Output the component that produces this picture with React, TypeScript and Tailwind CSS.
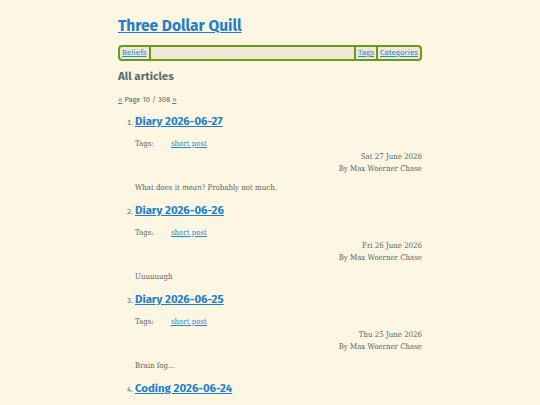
import React from "react";

const posts = [
  { title: "Diary 2026-06-27", date: "Sat 27 June 2026", body: <>What does it <em>mean</em>? Probably not much.</> },
  { title: "Diary 2026-06-26", date: "Fri 26 June 2026", body: <>Uuuuuugh</> },
  { title: "Diary 2026-06-25", date: "Thu 25 June 2026", body: <>Brain fog...</> },
  { title: "Coding 2026-06-24", date: "Wed 24 June 2026", body: <>Stuff.</> },
];

const sans = "font-['Fira_Sans','Lato',sans-serif]";
const serif = "font-['DejaVu_Serif_Condensed','DejaVu_Serif',serif]";

export default function App() {
  return (
    <div className="h-[405px] overflow-hidden bg-[#fdf6e3] text-[#56676c]">
      <div className="mx-auto w-[304px] pt-[15px]">
        <h1 className={`${sans} text-[15.5px] leading-[22px] font-bold`}>
          <a href="#" className="text-[#1f7fcc] underline">Three Dollar Quill</a>
        </h1>

        <nav className={`${sans} mt-[8px] flex h-[16px] items-center rounded-[4px] border-2 border-[#6b9a1a] bg-[#eee8d5] text-[8px] leading-[12px]`}>
          <a href="#" className="px-[2px] text-[#268bd2] underline">Beliefs</a>
          <div className="h-[12px] flex-1 border-x-2 border-[#6b9a1a]" />
          <a href="#" className="px-[2px] text-[#268bd2] underline">Tags</a>
          <div className="h-[12px] border-l-2 border-[#6b9a1a]" />
          <a href="#" className="px-[2px] text-[#268bd2] underline">Categories</a>
        </nav>

        <h2 className={`${sans} mt-[6px] text-[11.5px] leading-[18px] font-bold text-[#586e75]`}>All articles</h2>

        <p className={`${sans} mt-[9px] text-[7.6px] leading-[12px]`}>
          <a href="#" className="text-[#268bd2] underline">«</a> Page 10 / 308{" "}
          <a href="#" className="text-[#268bd2] underline">»</a>
        </p>

        <ol className="mt-[7px] list-decimal pl-[17px] marker:text-[7.5px] marker:font-['Fira_Sans']">
          {posts.map((p) => (
            <li key={p.title} className="mb-[8px]">
              <h3 className={`${sans} text-[11.4px] leading-[16px] font-bold`}>
                <a href="#" className="text-[#1f7fcc] underline">{p.title}</a>
              </h3>
              <div className={`${serif} mt-[9px] text-[7.8px] leading-[12px]`}>
                <div className="flex">
                  <span className="w-[36px]">Tags:</span>
                  <a href="#" className="text-[#268bd2] underline">short post</a>
                </div>
                <div className="mt-[1px] text-right">{p.date}</div>
                <div className="text-right">By Max Woerner Chase</div>
                <p className="mt-[7px]">{p.body}</p>
              </div>
            </li>
          ))}
        </ol>
      </div>
    </div>
  );
}
